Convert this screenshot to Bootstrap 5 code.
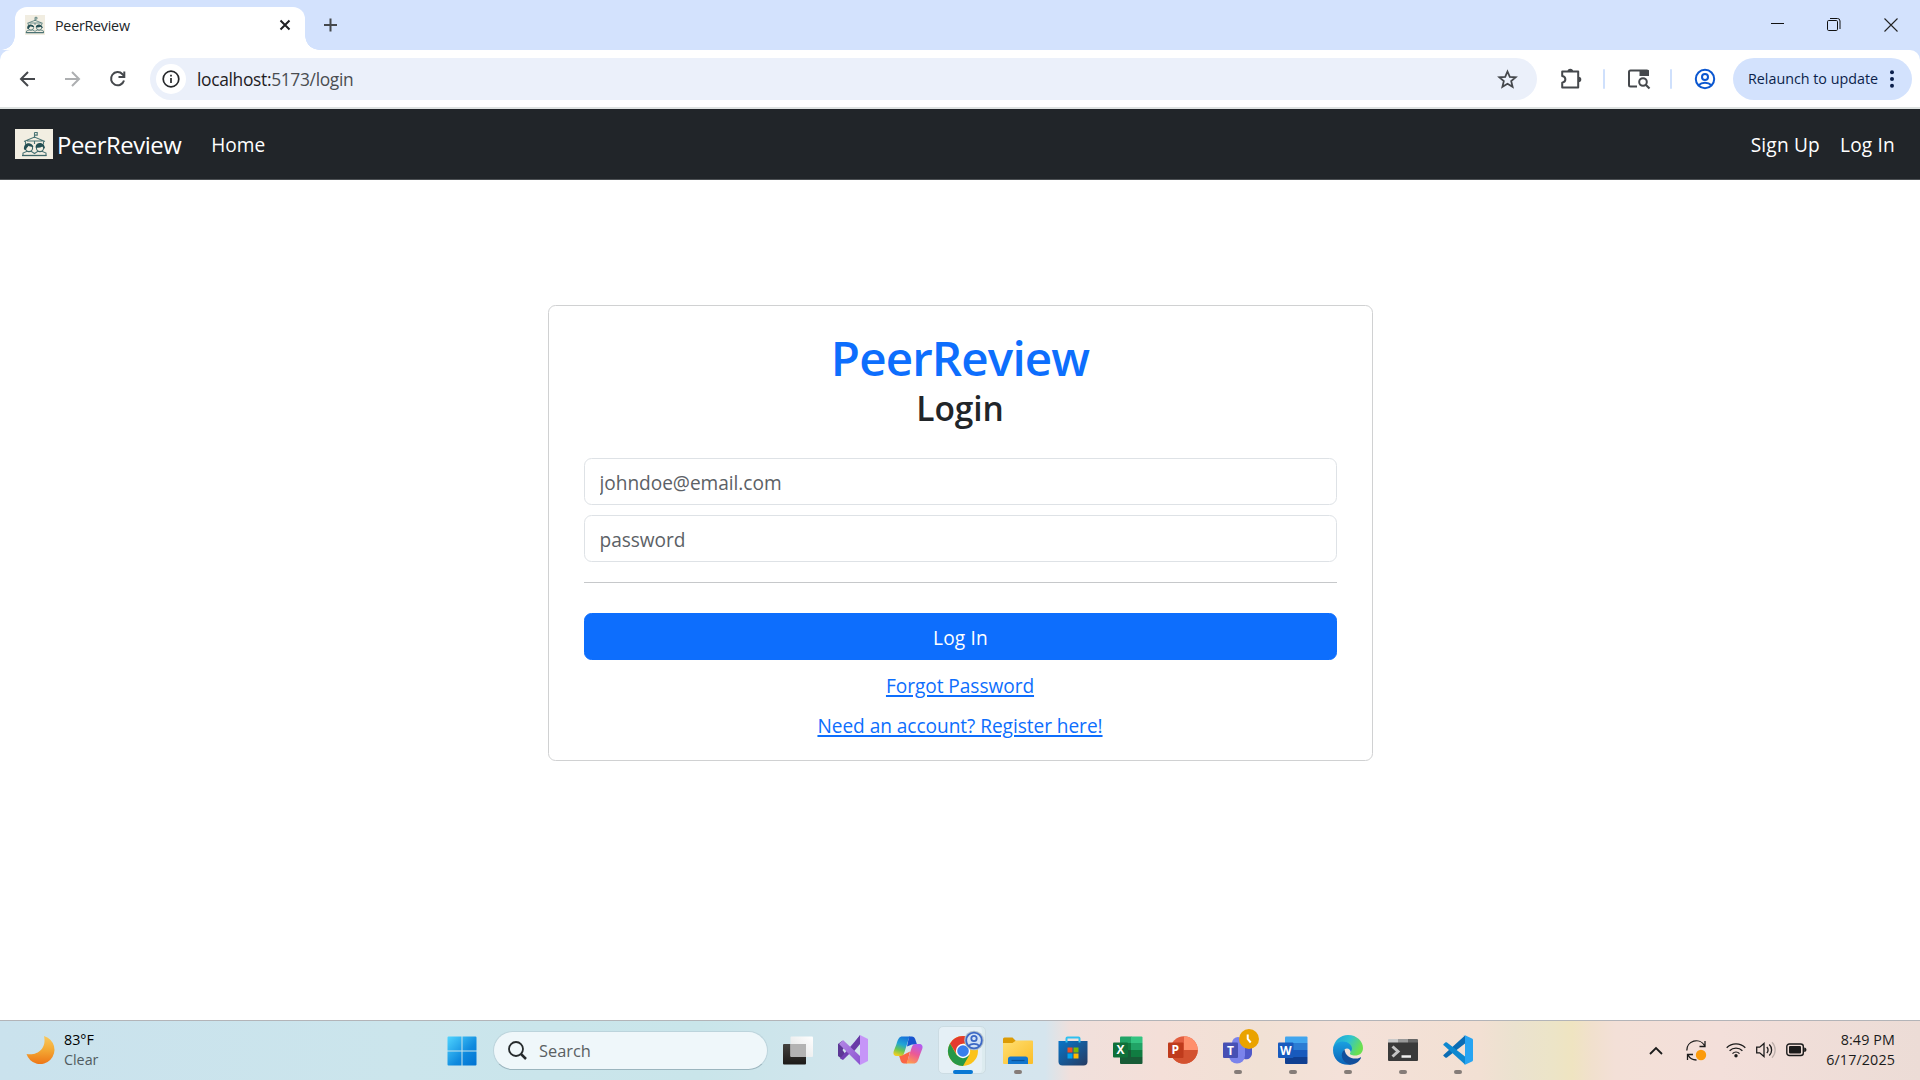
<!DOCTYPE html>
<html lang="en">
<head>
<meta charset="utf-8">
<title>PeerReview</title>
<link href="https://cdn.jsdelivr.net/npm/bootstrap@5.3.0/dist/css/bootstrap.min.css" rel="stylesheet">
<style>
html{font-size:20px}
body{font-family:"Open Sans","Noto Sans",sans-serif;height:1080px;overflow:hidden;background:#fff}
svg{display:block;flex:none;overflow:visible}
.f-ui{font-size:14.3px;line-height:20px;white-space:nowrap}
.tabstrip{height:50px;background:#d3e2fd;padding-left:15px}
.tab-active{width:290px;height:43px;margin-top:7px;background:#fff;border-radius:12px 12px 0 0;padding:0 14px 7px 10px;position:relative}
.tab-active::before,.tab-active::after{content:"";position:absolute;bottom:0;width:14px;height:14px}
.tab-active::before{left:-14px;background:radial-gradient(circle at 0 0,transparent 13.5px,#fff 14px)}
.tab-active::after{right:-14px;background:radial-gradient(circle at 100% 0,transparent 13.5px,#fff 14px)}
.tab-title{letter-spacing:-.25px;padding-top:2px}
.new-tab{margin-left:18px}
.win-ctl{width:58px;height:50px}
.tools-wrap{background:#d3e2fd;height:57px}
.tools{height:57px;background:#fff;border-radius:10px 10px 0 0;padding:0 8px 0 6px}
.slot{width:44px;height:44px;display:flex;align-items:center;justify-content:center;flex:none}
.slot-wide{width:48px}
.omni{height:42px;background:#ebf0fa;border-radius:21px;margin:0 12px 0 8px;padding:0 19px 0 6px}
.info-dot{width:30px;height:30px;border-radius:50%;background:#fff}
.url{font-size:17.4px;line-height:24px;margin-left:11px;color:#4a4d51;white-space:nowrap;letter-spacing:-.33px}
.url b{font-weight:400;color:#1f2023}
.vbar{width:2.5px;height:20px;background:#cfe0fc;border-radius:1px;flex:none;margin:0 11px 0 9.500px}
.relaunch{width:179px;height:42px;border-radius:21px;background:#d3e2fd;color:#0b1f4b;margin-left:6px;padding:0 17px 0 15px}
.app-nav{height:73px;border-top:2px solid #dee2e1;border-bottom:1px solid #4d5154;padding:0 15px;background:#212529}
.brand{font-size:23.9px;margin-left:4px;letter-spacing:-.48px;padding-top:2px}
.app-nav .nav-link{font-size:19.1px;color:#fff;padding:2px 10px 0}
.nav-home{margin-left:20px}
.nav-right .nav-link{letter-spacing:.2px}
.app-main{height:840px;padding:125px 0 0 1px}
.login-card{width:825px;height:456px;border-color:#d0d1d2;border-radius:7.5px;padding:22px 36px 0 35px}
.title-1{font-size:47.5px;line-height:59px;font-weight:550;letter-spacing:-.85px;margin:0;color:#0d6efd}
.title-2{font-size:33.5px;line-height:42px;font-weight:550;letter-spacing:-.1px;margin:0 0 29px}
.login-card .form-control,.login-card .btn,.login-card hr{width:753px!important}
.login-card .form-control{height:47px;font-size:19.1px;line-height:28px;border-radius:7.5px;padding:2px 14.5px 0;margin-bottom:10px;border-color:#dee2e6;letter-spacing:-.04px}
.form-control::placeholder{color:#5c6166}
.login-card hr{margin:10px 0 30px;opacity:1;border-top:1px solid #c6c8ca}
.login-card .btn{height:47px;font-size:19.1px;letter-spacing:.2px;border-radius:7.5px;padding:3px 0 0;margin-bottom:11px}
.login-card a{font-size:19.1px;line-height:30px;letter-spacing:-.05px;color:#0d6efd;display:block;width:max-content;margin:0 auto 10px;text-underline-offset:2px;text-decoration-thickness:2px}
.taskbar{height:60px;border-top:1px solid #b3b4b8;background:linear-gradient(90deg,#cae2ed 0,#cbe5ec 400px,#c9e5ea 700px,#d2e5ed 860px,#d5e5ee 1045px,#f0e0dc 1070px,#f4dfd8 1160px,#f1e1d5 1260px,#f4e1d9 1340px,#f2e0d3 1480px,#ebe2cf 1515px,#ece4c8 1550px,#efe4c1 1572px,#f1e0cd 1592px,#f3e0d7 1615px,#f3dfda 1720px,#ecdcd6 1920px)}
.weather{width:433px;padding-left:25px}
.weather-text{margin-left:9px;padding-bottom:1px}
.clear-txt{color:#505b60}
.app-slot{width:55px;height:59px;flex:none;display:flex;align-items:center;justify-content:center;position:relative}
.app-slot.running::after{content:"";position:absolute;bottom:6px;left:24px;width:8px;height:4px;border-radius:2px;background:#857c78}
.app-slot.current::after{left:18px;width:20px;background:#0a78d4}
.hl{position:absolute;left:3px;top:5px;width:48px;height:48px;border-radius:5px;background:#e5f0f6;border:1px solid #ccdce3;box-shadow:inset -4px 0 0 -1px #dcebef}
.badged{position:relative;left:4px;top:-3px}
.task-search{width:275px;height:39px;border-radius:20px;background:#eff7fa;border:1px solid #bcd4dc;border-bottom-color:#9bb5be;margin:0 2px 0 5px;padding-left:14px;color:#5a6062;font-size:16.4px}
.task-search span{margin-left:12px;padding-top:1px}
.tray{padding-right:25px;gap:10px}
.clock{width:88px;color:#1b1b1b;letter-spacing:.12px;margin-left:-10px;padding-bottom:1px}
</style>
<script src="https://cdn.jsdelivr.net/npm/bootstrap@5.3.0/dist/js/bootstrap.bundle.min.js"></script>
</head>
<body class="d-flex flex-column">
<svg width="0" height="0" class="position-absolute">
 <defs>
  <symbol id="logo" viewBox="0 0 38 30">
   <g fill="none" stroke="#4a7475" stroke-width="1.100"><path d="M19.500 9V3.500M19.500 3.500h2.700v2.600h-2.700M9 12.500 19.500 8 30 12.500M12 12h15.500M10.500 12.500v3M28.500 12.500v3M19.500 12v3"/><path d="M8 26.500v-2.500l3.500-1.500h5l3 2 3-2h5l3.500 1.500v2.500z"/></g>
   <g fill="#f2eee2" stroke="#3c6668" stroke-width="1.100"><circle cx="14" cy="19" r="3.600"/><circle cx="25" cy="19" r="3.600"/></g>
   <path fill="#244f53" d="M9 20.500c-1-8 8-8 9.500-2.500-3-.2-4-.5-5-1.300-.7 1.500-2 1.800-2.600 4.300zM20.500 18.500c0-6 9-6 9.500 1-1.400-.2-2-1-2.500-2-2 1.200-4.500 1.500-7 1z"/><path stroke="#3c6668" stroke-width="1.300" d="M7 26.500h24.500"/>
  </symbol>
 </defs>
</svg>

<header>
 <div class="tabstrip d-flex">
  <div class="tab-active d-flex align-items-center">
   <svg width="20" height="20" viewBox="6 0 27 30" preserveAspectRatio="none"><path fill="#f1ede1" d="M6 0h27v30H6z"/><use href="#logo" width="38" height="30"/></svg>
   <span class="f-ui tab-title ms-2">PeerReview</span>
   <svg class="ms-auto" width="12" height="12" viewBox="0 0 12 12"><path d="M1.500 1.500l9 9M10.500 1.500l-9 9" stroke="#1f2023" stroke-width="2"/></svg>
  </div>
  <svg class="new-tab align-self-center" width="14" height="14" viewBox="0 0 14 14"><path d="M7.500 .5v13M1 7h13" stroke="#45484c" stroke-width="2"/></svg>
  <div class="ms-auto d-flex">
   <div class="win-ctl d-flex align-items-center justify-content-center"><svg width="14" height="14" viewBox="0 0 14 14"><path d="M3 5.500h13" stroke="#111"/></svg></div>
   <div class="win-ctl d-flex align-items-center justify-content-center"><svg width="14" height="14" viewBox="0 0 14 14"><rect x="1.500" y="2.500" width="10" height="10" rx="1.200" fill="none" stroke="#111"/><path d="M4 .5h7.500a2.500 2.500 0 0 1 2.500 2.500v8" fill="none" stroke="#111"/></svg></div>
   <div class="win-ctl d-flex align-items-center justify-content-center"><svg width="14" height="14" viewBox="0 0 14 14"><path d="M.5.5l13 13M13.500.5l-13 13" stroke="#222" stroke-width="1.100"/></svg></div>
  </div>
 </div>
 <div class="tools-wrap">
 <div class="tools d-flex align-items-center">
  <div class="slot"><svg width="16" height="16" viewBox="0 0 16 16"><path d="M15 8H2M8 1 1 8l7 7" fill="none" stroke="#45484c" stroke-width="2"/></svg></div>
  <div class="slot"><svg width="16" height="16" viewBox="0 0 16 16"><path d="M1 8H14M8 1l7 7-7 7" fill="none" stroke="#adafb1" stroke-width="2"/></svg></div>
  <div class="slot slot-wide"><svg width="16" height="16" viewBox="0 0 16 16"><path d="M14 9.500A6.600 6.600 0 1 1 12.500 3.200L14 5" fill="none" stroke="#45484c" stroke-width="2"/><path d="M14.300 .5V6H8.500" fill="none" stroke="#45484c" stroke-width="2"/></svg></div>
  <div class="omni flex-grow-1 d-flex align-items-center">
   <div class="info-dot d-flex align-items-center justify-content-center"><svg width="18" height="18" viewBox="0 0 18 18"><circle cx="9" cy="9" r="7.800" fill="none" stroke="#26282b" stroke-width="1.700"/><path d="M9 8v5M9 4.800v1.700" stroke="#26282b" stroke-width="1.700"/></svg></div>
   <span class="url"><b>localhost:</b>5173/login</span>
   <svg class="ms-auto" width="21" height="20" viewBox="0 0 21 20"><path d="M10.500 2.500l2.300 5.300 5.900.5-4.500 3.800 1.400 5.700-5.100-3-5.100 3 1.400-5.700-4.500-3.800 5.900-.5z" fill="none" stroke="#45484c" stroke-width="1.800"/></svg>
  </div>
  <div class="slot"><svg width="22" height="22" viewBox="0 0 22 22"><path d="M2.200 3.500h16v16h-16v-4.800c4.200-.8 4.200-6 0-6.800z" fill="none" stroke="#45484c" stroke-width="2" stroke-linejoin="round"/><path d="M7.500 3.500a2.800 2.800 0 0 1 5.600 0zM18.500 8.700a2.800 2.800 0 0 1 0 5.600z" fill="#45484c"/></svg></div>
  <div class="vbar"></div>
  <div class="slot"><svg width="23" height="20" viewBox="0 0 23 20"><path d="M10 17.500H3.500a1.500 1.500 0 0 1-1.500-1.500V3a1.500 1.500 0 0 1 1.500-1.500H20a1 1 0 0 1 1 1V7" fill="none" stroke="#45484c" stroke-width="2"/><path d="M12.500 1H21a1 1 0 0 1 1 1v5h-9.500z" fill="#45484c"/><circle cx="16" cy="13" r="4.800" fill="#fff"/><circle cx="16" cy="13" r="3.800" fill="none" stroke="#45484c" stroke-width="2"/><path d="M18.500 15.500l4 4" stroke="#45484c" stroke-width="2.200"/></svg></div>
  <div class="vbar"></div>
  <div class="slot"><svg width="22" height="22" viewBox="0 0 22 22"><g fill="none" stroke="#0b57d0" stroke-width="2"><circle cx="11" cy="11" r="9.200"/><circle cx="11" cy="9" r="3"/><path d="M4.500 17.300c3.500-3.300 9.500-3.300 13 0"/></g></svg></div>
  <div class="relaunch d-flex align-items-center justify-content-between"><span class="f-ui">Relaunch to update</span>
   <svg width="6" height="20" viewBox="0 0 6 20"><g fill="#0b1f4b"><circle cx="3" cy="3.300" r="2"/><circle cx="3" cy="10" r="2"/><circle cx="3" cy="16.700" r="2"/></g></svg></div>
 </div>
 </div>
</header>

<nav class="app-nav d-flex align-items-center text-white">
 <svg width="38" height="30" viewBox="0 0 38 30"><path fill="#f2eee2" d="M0 0h38v30H0z"/><use href="#logo" width="38" height="30"/></svg>
 <span class="brand text-nowrap">PeerReview</span>
 <a class="nav-link nav-home" href="#">Home</a>
 <div class="nav-right d-flex ms-auto"><a class="nav-link" href="#">Sign Up</a><a class="nav-link" href="#">Log In</a></div>
</nav>

<main class="app-main">
 <div class="card login-card mx-auto text-center">
  <h1 class="title-1">PeerReview</h1>
  <h3 class="title-2">Login</h3>
  <input class="form-control" type="email" placeholder="johndoe@email.com">
  <input class="form-control" type="password" placeholder="password">
  <hr>
  <button class="btn btn-primary w-100">Log In</button>
  <a href="#">Forgot Password</a>
  <a href="#">Need an account? Register here!</a>
 </div>
</main>

<footer class="taskbar d-flex align-items-center">
 <div class="weather d-flex align-items-center">
  <svg width="30" height="30" viewBox="0 0 30 30"><defs><linearGradient id="mo" x1="0" y1="0" x2="0" y2="1"><stop offset="0" stop-color="#f9c95d"/><stop offset=".5" stop-color="#f3a834"/><stop offset="1" stop-color="#ee7616"/></linearGradient></defs><path fill="url(#mo)" d="M19 0a14.300 14.300 0 1 1-17.500 18C12 20 22 13 19 0z"/></svg>
  <div class="weather-text f-ui"><div class="text-black">83°F</div><div class="clear-txt">Clear</div></div>
 </div>
 <div class="app-slot"><svg width="30" height="30" viewBox="0 0 30 30"><defs><linearGradient id="wn" x1="0" y1="0" x2="1" y2="1"><stop offset="0" stop-color="#4fd4ff"/><stop offset=".6" stop-color="#0f8ade"/><stop offset="1" stop-color="#0072d2"/></linearGradient></defs><path fill="url(#wn)" d="M2.500.5h13v14h-14v-13a1 1 0 0 1 1-1zM16.500.5h13a1 1 0 0 1 1 1v13h-14zM1.500 15.500h14v14h-13a1 1 0 0 1-1-1zM16.500 15.500h14v13a1 1 0 0 1-1 1h-13z"/></svg></div>
 <div class="task-search d-flex align-items-center"><svg width="19" height="19" viewBox="0 0 19 19"><circle cx="8" cy="8" r="7" fill="none" stroke="#252a2c" stroke-width="1.800"/><path d="M13 13l5 5" stroke="#252a2c" stroke-width="2.500"/></svg><span>Search</span></div>

 <div class="app-slot"><svg width="30" height="30" viewBox="0 0 30 30"><defs><linearGradient id="tv" x1="0" y1="0" x2="0" y2="1"><stop offset="0" stop-color="#44423f"/><stop offset="1" stop-color="#1c1a18"/></linearGradient><linearGradient id="tw" x1="1" y1="0" x2="0" y2="1"><stop offset="0" stop-color="#fff"/><stop offset="1" stop-color="#e0e2e3"/></linearGradient></defs><rect x="0" y="8" width="23" height="20.500" rx="1" fill="url(#tv)"/><rect x="7.500" y=".5" width="22.500" height="20.500" rx="1" fill="url(#tw)"/><path fill="#b3b3b3" d="M7.500 8H23v13H8.500a1 1 0 0 1-1-1z"/></svg></div>

 <div class="app-slot"><svg width="30" height="30" viewBox="0 1 30 30"><defs><linearGradient id="vs" x1="0" y1="0" x2="1" y2="1"><stop offset="0" stop-color="#b488e6"/><stop offset="1" stop-color="#8a52cf"/></linearGradient></defs><path fill="#5c3795" d="M0 9l4-3 4 4-3.500 5L8 20l-4 4-4-3z"/><path fill="#7240b4" d="M2 23.500 22 .5v8L5 25z"/><path fill="#673aa6" d="M10 16.500 22 0v9L13 20z"/><path fill="url(#vs)" d="M5 5 22 21v9L1 9z"/><path fill="#c695f8" d="M22 0l8 4v22l-8 4z"/></svg></div>

 <div class="app-slot"><svg width="30" height="28" viewBox="0 1 30 28"><defs><linearGradient id="c1" x1=".6" y1="0" x2=".3" y2="1"><stop offset="0" stop-color="#1674da"/><stop offset=".4" stop-color="#21a5d5"/><stop offset=".7" stop-color="#69c551"/><stop offset="1" stop-color="#f2ce21"/></linearGradient><linearGradient id="c2" x1=".7" y1="0" x2=".3" y2="1"><stop offset="0" stop-color="#b35cf0"/><stop offset=".5" stop-color="#ec5995"/><stop offset="1" stop-color="#ff9b4e"/></linearGradient></defs><path fill="#1753cf" d="M16 .5h2c3 0 4 1 5 5l1 3h-5l-5 2z"/><path fill="#fa6545" d="M14 27.500h-2c-3 0-4-1-5-5l-1-3 5-1 6-3z"/><path fill="url(#c1)" d="M17.500.5H9.500C6 .5 5 3 3.500 8L.8 15c-1 3 .2 5 3.200 5h3c2.500 0 3.500-1 4.500-4l3.500-11c.7-3 1.500-4.500 2.500-4.500z"/><path fill="url(#c2)" d="M12.500 27.500h8c3.500 0 4.500-2.500 6-7.500l2.700-7c1-3-.2-5-3.200-5h-3c-2.500 0-3.500 1-4.500 4L15 23c-.7 3-1.500 4.500-2.500 4.500z"/></svg></div>

 <div class="app-slot running current"><div class="hl"></div>
  <svg class="badged" width="36" height="38" viewBox="1 0 36 38"><circle cx="15" cy="22" r="15" fill="#fbc31b"/><path fill="#e33b2e" d="M2 14.500A15 15 0 0 1 28 14.500H15L9 25.500z"/><path fill="#279847" d="M2 14.500l6.500 11.200L15 29l6.500-3.300L15 37A15 15 0 0 1 2 14.500z"/><circle cx="15" cy="22" r="7.200" fill="#fff"/><circle cx="15" cy="22" r="5.800" fill="#397fec"/><circle cx="26" cy="11.500" r="9.800" fill="#aebdca"/><circle cx="26" cy="11.500" r="8.300" fill="#d2e2f6"/><g fill="none" stroke="#3c68c5" stroke-width="1.800"><circle cx="26" cy="11.500" r="7.800"/><circle cx="26" cy="9.500" r="2.700"/><path d="M20.500 16.800c3-2.700 8-2.700 11 0"/></g></svg></div>

 <div class="app-slot running"><svg width="30" height="28" viewBox="0 0 30 28"><defs><linearGradient id="fo" x1="0" y1="0" x2="1" y2="1"><stop offset="0" stop-color="#ffdf72"/><stop offset="1" stop-color="#fbbd27"/></linearGradient></defs><path fill="#dc9b05" d="M0 2a1.500 1.500 0 0 1 1.500-1.500h8L13 4H29v8H0z"/><path fill="url(#fo)" d="M0 6h9.500l3.500-2.500h16a1 1 0 0 1 1 1V26a1 1 0 0 1-1 1H1a1 1 0 0 1-1-1z"/><path fill="#1276cf" d="M5 27v-5a2.500 2.500 0 0 1 2.500-2.500h15A2.500 2.500 0 0 1 25 22v5z"/><path stroke="#08539c" stroke-width="1.200" d="M8.500 23.500h13"/></svg></div>

 <div class="app-slot"><svg width="30" height="30" viewBox="0 0 30 30"><defs><linearGradient id="st" x1="0" y1="0" x2="1" y2="1"><stop offset="0" stop-color="#0875c8"/><stop offset="1" stop-color="#263b62"/></linearGradient></defs><path fill="url(#st)" d="M.5 5h29v20.500a4 4 0 0 1-4 4h-21a4 4 0 0 1-4-4z"/><path d="M8.500 6.500V2.500a1 1 0 0 1 1-1h11a1 1 0 0 1 1 1v4" fill="none" stroke="#30c0f0" stroke-width="2"/><path fill="#f25022" d="M9.500 11.500h5v5h-5z"/><path fill="#7fba00" d="M15.500 11.500h5v5h-5z"/><path fill="#00a4ef" d="M9.500 17.500h5v5h-5z"/><path fill="#ffb900" d="M15.500 17.500h5v5h-5z"/></svg></div>

 <div class="app-slot"><svg width="30" height="28" viewBox="0 1 30 28"><path fill="#21a366" d="M8 .5h10.500V7H7V1.500a1 1 0 0 1 1-1z"/><path fill="#33c481" d="M18 .5h10.500a1 1 0 0 1 1 1V7H18z"/><path fill="#107c41" d="M7 7h11v7H7z"/><path fill="#21a366" d="M18 7h11.500v7H18z"/><path fill="#185c37" d="M7 14h11v7H7z"/><path fill="#107c41" d="M18 14h11.500v7H18z"/><path fill="#185c37" d="M7 21h22.500v6a1 1 0 0 1-1 1H8a1 1 0 0 1-1-1z"/><rect y="6.500" width="15" height="15" rx="1" fill="#0f7039"/><text x="7.500" y="18.200" font-size="12" font-weight="700" fill="#fff" text-anchor="middle">X</text></svg></div>

 <div class="app-slot"><svg width="30" height="28" viewBox="0 1 30 28"><circle cx="16" cy="14" r="13.700" fill="#e25e40"/><path fill="#ff8f6b" d="M16 .3A13.700 13.700 0 0 1 29.700 14H16z"/><path fill="#d35230" d="M2.300 14h27.400a13.700 13.700 0 0 1-27.400 0z"/><rect y="6.500" width="15.500" height="15.500" rx="1" fill="#bf3b1c"/><text x="7.300" y="18.200" font-size="12" font-weight="700" fill="#fff" text-anchor="middle">P</text></svg></div>

 <div class="app-slot running"><svg class="badged" width="38" height="38" viewBox="1 1 38 38"><circle cx="16" cy="15" r="6" fill="#7b83eb"/><path fill="#5059c9" d="M19 18h10a1 1 0 0 1 1 1v6a6 6 0 0 1-8 6z"/><path fill="#7b83eb" d="M7 18h16v9.500a8 8 0 0 1-16 0z"/><rect x="1" y="14.500" width="15" height="15.500" rx="1" fill="#4750b4"/><text x="8.500" y="26.500" font-size="12" font-weight="700" fill="#fff" text-anchor="middle">T</text><circle cx="27" cy="11" r="10" fill="#eaa300"/><path d="M25.700 6.500V11l3 3.500" fill="none" stroke="#fff" stroke-width="2"/></svg></div>

 <div class="app-slot running"><svg width="30" height="28" viewBox="0 1 30 28"><path fill="#41a5ee" d="M8 .5h20.500a1 1 0 0 1 1 1V7H7V1.500a1 1 0 0 1 1-1z"/><path fill="#2b7cd3" d="M7 7h22.500v7H7z"/><path fill="#185abd" d="M7 14h22.500v7H7z"/><path fill="#103f91" d="M7 21h22.500v6a1 1 0 0 1-1 1H8a1 1 0 0 1-1-1z"/><rect y="6.500" width="15.500" height="15.500" rx="1" fill="#185abd"/><text x="7.700" y="18.500" font-size="12" font-weight="700" fill="#fff" text-anchor="middle">W</text></svg></div>

 <div class="app-slot running"><svg width="30" height="30" viewBox="0 1 30 30"><defs><linearGradient id="e1" x1="0" y1="0" x2="1" y2=".4"><stop offset="0" stop-color="#1b9fdc"/><stop offset=".55" stop-color="#2fc3d0"/><stop offset="1" stop-color="#6be04f"/></linearGradient><linearGradient id="e2" x1="0" y1="0" x2="0" y2="1"><stop offset="0" stop-color="#1aa0e0"/><stop offset="1" stop-color="#0c62b8"/></linearGradient></defs><path fill="url(#e1)" d="M0 14C1 5.500 7.500 0 15 0c9 0 15 6.500 15 13 0 5-3.500 7.500-8 7.500-3.500 0-5.500-1-5-2.500 2.500-2.500 1-7-4-8C7 9 2 11 0 14z"/><path fill="url(#e2)" d="M0 15c0-5 4.500-8.500 9.500-8.500 5.500 0 9.500 3.500 9.500 7 0 1.500-1 3-1.500 3.500 0-2-1.500-3.500-3.500-3.500-4 0-5 6-2 10.500 2 3 4 5 7 5.500C8 31.500 0 25 0 15z"/><path fill="#124f9c" d="M11.500 14.500c-5 4-3 12.500 5 15 5 .5 9-2 11.500-6.500.3-.6-.2-1-.7-.6-6.300 3.100-14.800 0-15.800-7.900z"/></svg></div>

 <div class="app-slot running"><svg width="30" height="24" viewBox="0 1 30 24"><path fill="#3a3a3a" d="M0 3h30v19a1 1 0 0 1-1 1H1a1 1 0 0 1-1-1z"/><path fill="#cacaca" d="M1 1h9v3.500H0V2a1 1 0 0 1 1-1z"/><path fill="#999" d="M10 1h10v3.500H10z"/><path fill="#666" d="M20 1h9a1 1 0 0 1 1 1v2.500H20z"/><path d="M4.500 8.500l5.500 5-5.500 5" fill="none" stroke="#c4c4c4" stroke-width="3"/><path stroke="#efefef" stroke-width="2.500" d="M13.500 18.500H23"/></svg></div>

 <div class="app-slot running"><svg width="30" height="30" viewBox="0 1 30 30"><path fill="#0a6cb4" d="M1 19.500 22 .5v8L4 22.500c-.6.500-1.200.4-1.700 0L.6 21c-.5-.4-.4-1 .4-1.500z"/><path fill="#0d88d0" d="M1 10.500 22 29.500v-8L4 7.500c-.6-.5-1.200-.4-1.700 0L.6 9c-.5.500-.4 1 .4 1.500z"/><path fill="#27a4f2" d="M22 .2l7 3.300c.6.300 1 .8 1 1.500v20c0 .7-.4 1.200-1 1.500l-7 3.300c-1 .4-1.800-.1-1.800-.1.800.4 1.800.2 1.800-1.200V1.500c0-1.200-1-1.700-1.800-1.200 0 0 .8-.5 1.800-.1z"/></svg></div>

 <div class="tray d-flex align-items-center ms-auto">
  <svg width="14" height="8" viewBox="0 0 14 8"><path d="M1 7l6-6 6 6" fill="none" stroke="#1b1b1b" stroke-width="1.800"/></svg>
  <svg style="margin-left:13px" width="21" height="21" viewBox="0 0 21 21"><path d="M.8 10.500A9.500 9.500 0 0 1 18.500 5.500M19 1v5.500h-5.500M10.500 20A9.500 9.500 0 0 1 2 15M1.500 20v-5.500H7" fill="none" stroke="#1b1b1b" stroke-width="1.300"/><circle cx="15" cy="15" r="5.200" fill="#fb9b0c"/></svg>
  <svg style="margin-left:9px" width="20" height="16" viewBox="0 1 20 16"><g fill="none" stroke="#1b1b1b" stroke-width="1.300"><path d="M.7 5.700a13.200 13.200 0 0 1 18.600 0M3.600 8.700a9.100 9.100 0 0 1 12.800 0M6.500 11.600a5 5 0 0 1 7 0"/></g><circle cx="10" cy="13.800" r="1.700" fill="#1b1b1b"/></svg>
  <svg width="20" height="16" viewBox="0 1 20 16"><g fill="none" stroke="#1b1b1b" stroke-width="1.300"><path d="M.7 5.200h3L8 1.500v13L3.700 10.800h-3zM10.800 5a4.200 4.200 0 0 1 0 6M13.300 2.500a7.700 7.700 0 0 1 0 11"/><path stroke="#bdb0ac" d="M16 .3a11 11 0 0 1 0 15.400"/></g></svg>
  <svg width="21" height="14" viewBox="0 1 21 14"><rect x=".8" y="1" width="16.500" height="11.500" rx="2.500" fill="none" stroke="#1b1b1b" stroke-width="1.400"/><rect x="3" y="3" width="12" height="7.500" rx="1" fill="#1b1b1b"/><path fill="#1b1b1b" d="M18.200 4.500c3 0 3 4.500 0 4.500z"/></svg>
  <div class="clock f-ui text-end"><div>8:49 PM</div><div>6/17/2025</div></div>
 </div>
</footer>
</body>
</html>
